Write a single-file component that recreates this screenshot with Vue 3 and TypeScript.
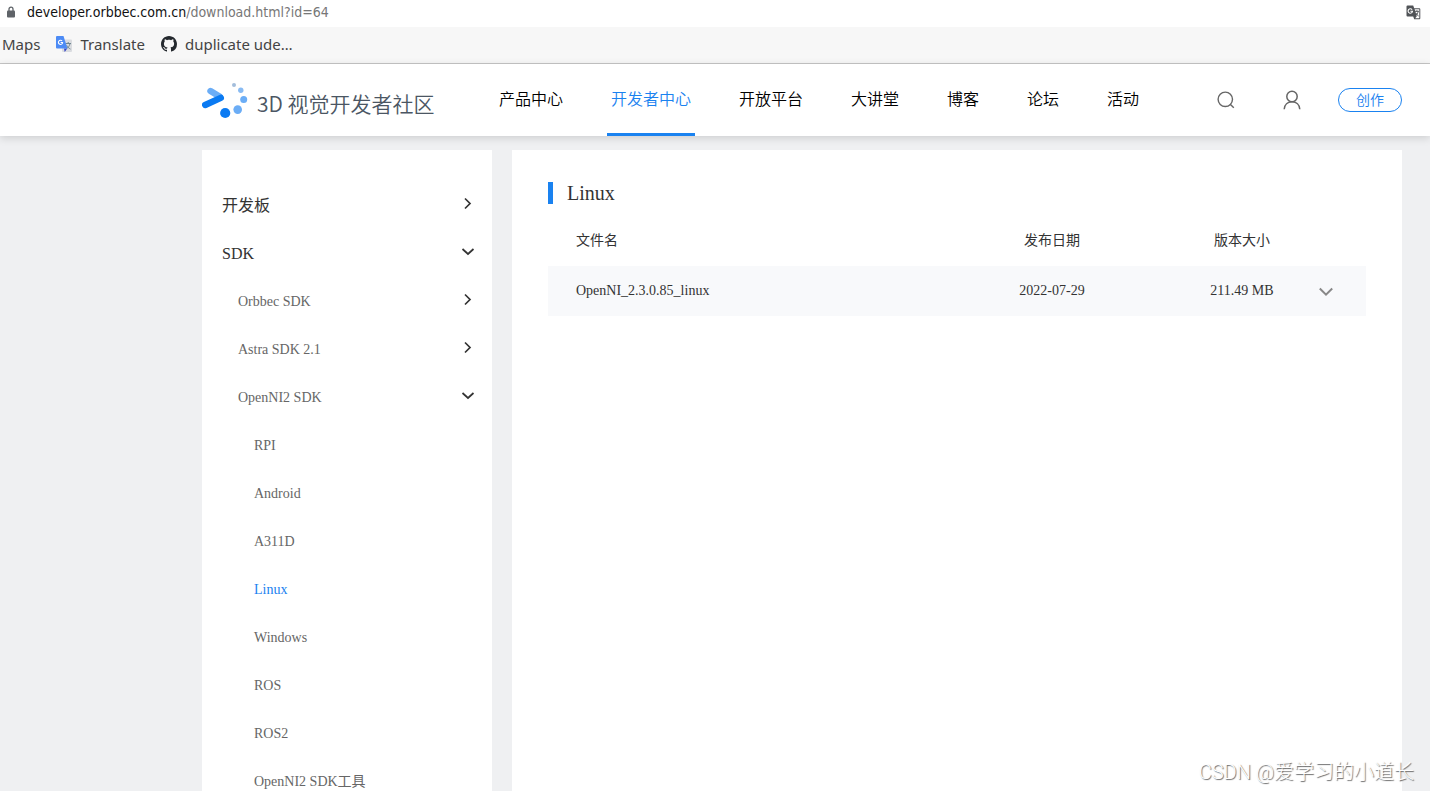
<script setup lang="ts">
import { ref } from 'vue'

interface NavItem {
  label: string
  active?: boolean
}

interface MenuItem {
  label: string
  level: 1 | 2 | 3
  arrow?: 'right' | 'down'
  active?: boolean
}

interface FileRow {
  name: string
  date: string
  size: string
}

const address = ref('developer.orbbec.com.cn')
const path = ref('/download.html?id=64')

const nav: NavItem[] = [
  { label: '产品中心' },
  { label: '开发者中心', active: true },
  { label: '开放平台' },
  { label: '大讲堂' },
  { label: '博客' },
  { label: '论坛' },
  { label: '活动' },
]

const menu: MenuItem[] = [
  { label: '开发板', level: 1, arrow: 'right' },
  { label: 'SDK', level: 1, arrow: 'down' },
  { label: 'Orbbec SDK', level: 2, arrow: 'right' },
  { label: 'Astra SDK 2.1', level: 2, arrow: 'right' },
  { label: 'OpenNI2 SDK', level: 2, arrow: 'down' },
  { label: 'RPI', level: 3 },
  { label: 'Android', level: 3 },
  { label: 'A311D', level: 3 },
  { label: 'Linux', level: 3, active: true },
  { label: 'Windows', level: 3 },
  { label: 'ROS', level: 3 },
  { label: 'ROS2', level: 3 },
  { label: 'OpenNI2 SDK工具', level: 3 },
]

const files: FileRow[] = [
  { name: 'OpenNI_2.3.0.85_linux', date: '2022-07-29', size: '211.49 MB' },
]
</script>

<template>
  <div class="page">
    <div class="address-bar">
      <svg class="lock" width="8" height="12" viewBox="0 0 8 12" aria-hidden="true">
        <path d="M2 5V3.200a2 2 0 0 1 4 0V5" fill="none" stroke="#5f6368" stroke-width="1.300" />
        <rect x="0" y="4.500" width="8" height="7" rx="1" fill="#5f6368" />
      </svg>
      <span class="url">{{ address }}<span class="url-path">{{ path }}</span></span>
      <button class="translate" type="button" aria-label="Translate this page">
        <svg width="15" height="15" viewBox="0 0 15 15" aria-hidden="true">
          <path d="M1.500.5h5.700l1 2.800H13.300a1 1 0 0 1 1 1v8.900a1 1 0 0 1-1 1H8.200L7.200 11.500H1.500a1 1 0 0 1-1-1v-9a1 1 0 0 1 1-1z" fill="#505357" />
          <path d="M8.600 4.200h4.700v9H9.200l1.600-1.900z" fill="#fff" />
          <path d="M6.100 4.700A2.200 2.200 0 1 0 6.500 6.200H4.400" fill="none" stroke="#fff" stroke-width="1.100" />
          <path d="M8.900 6.300h4M10.900 5.300v1M12.200 6.400c-.4 2-1.500 3.300-2.700 4.200M9.700 7.800c.7 1.400 1.600 2.300 2.900 3.200" fill="none" stroke="#505357" />
        </svg>
      </button>
    </div>

    <nav class="bookmarks" aria-label="Bookmarks">
      <a href="#maps">Maps</a>
      <a href="#translate">
        <svg width="16" height="16" viewBox="0 0 16 16" aria-hidden="true">
          <rect x="6" y="3.500" width="10" height="12.500" rx="1" fill="#dadce0" />
          <path d="M9.500 7.500h5.500M12.200 6v1.500M14 7.700c-.5 2.300-2 4-3.600 5M10.600 9.200c.8 1.700 2.200 3 3.900 3.900" fill="none" stroke="#6f8791" />
          <path d="M8 12.500h3.200L8.700 16z" fill="#3342c5" />
          <path d="M1 0h6.500l4 12.500H1a1 1 0 0 1-1-1V1a1 1 0 0 1 1-1z" fill="#4c8bf5" />
          <path d="M6.100 5A2.100 2.100 0 1 0 6.600 6.500H4.600" fill="none" stroke="#fff" stroke-width="1.100" />
        </svg>
        Translate
      </a>
      <a href="#github">
        <svg width="16" height="16" viewBox="0 0 16 16" aria-hidden="true">
          <path fill="#24292e" d="M8 0C3.580 0 0 3.580 0 8c0 3.540 2.290 6.530 5.470 7.590.4.070.55-.17.55-.38 0-.19-.01-.82-.01-1.490-2.010.37-2.530-.49-2.690-.94-.09-.23-.48-.94-.82-1.130-.28-.15-.68-.52-.01-.53.63-.01 1.080.58 1.230.82.72 1.210 1.870.87 2.330.66.07-.52.28-.87.51-1.070-1.780-.2-3.640-.89-3.640-3.950 0-.87.31-1.590.82-2.150-.08-.2-.36-1.020.08-2.120 0 0 .67-.21 2.200.82.64-.18 1.320-.27 2-.27s1.360.09 2 .27c1.530-1.040 2.200-.82 2.200-.82.44 1.100.16 1.920.08 2.120.51.56.82 1.270.82 2.150 0 3.070-1.870 3.750-3.650 3.950.29.25.54.73.54 1.480 0 1.070-.01 1.930-.01 2.200 0 .21.15.46.55.38A8.010 8.010 0 0 0 16 8c0-4.420-3.580-8-8-8z" />
        </svg>
        duplicate ude…
      </a>
    </nav>

    <header class="site-header">
      <a class="logo" href="#home">
        <svg width="47" height="38" viewBox="0 0 47 38" aria-hidden="true">
          <path d="M8.500 10 17.500 15.500" stroke="#6badf6" stroke-width="6.400" stroke-linecap="round" />
          <path d="M3.200 24 18.800 16.800" stroke="#0a7af2" stroke-width="6.400" stroke-linecap="round" />
          <circle cx="32" cy="4" r="2" fill="#a3bddb" />
          <circle cx="38.800" cy="9.300" r="2.700" fill="#89bbf3" />
          <circle cx="41.700" cy="18.500" r="3.500" fill="#6badf6" />
          <circle cx="35.700" cy="28.600" r="4.300" fill="#6badf6" />
          <circle cx="23.200" cy="32" r="5.100" fill="#0a7af2" />
        </svg>
        <span class="logo-text">3D 视觉开发者社区</span>
      </a>
      <nav class="main-nav" aria-label="Main">
        <a v-for="item in nav" :key="item.label" href="#nav" :class="{ active: item.active }">{{ item.label }}</a>
      </nav>
      <div class="tools">
        <button class="icon-button" type="button" aria-label="搜索">
          <svg width="18" height="18" viewBox="0 0 18 18" fill="none" stroke="#666" stroke-width="1.400" aria-hidden="true">
            <circle cx="8.300" cy="8.300" r="7.200" />
            <path d="M13.200 13.200 16.800 16.800" />
          </svg>
        </button>
        <button class="icon-button" type="button" aria-label="用户">
          <svg width="18" height="20" viewBox="0 0 18 20" fill="none" stroke="#666" stroke-width="1.500" aria-hidden="true">
            <ellipse cx="9" cy="6.500" rx="5.200" ry="5.300" />
            <path d="M1.200 19.200c.3-4.600 3.500-7.400 7.800-7.400s7.500 2.800 7.800 7.400" />
          </svg>
        </button>
        <button class="create" type="button">创作</button>
      </div>
    </header>

    <div class="content">
      <aside class="sidebar">
        <a
          v-for="item in menu"
          :key="item.label"
          href="#menu"
          :class="['menu-item', 'level-' + item.level, { active: item.active }]"
        >
          <span>{{ item.label }}</span>
          <svg v-if="item.arrow" class="arrow" width="14" height="14" viewBox="0 0 14 14" aria-hidden="true">
            <path
              :d="item.arrow === 'right' ? 'M4 1.500 9 6.500 4 11.500' : 'M1.500 4 7 9 12.500 4'"
              fill="none"
              stroke="#333"
              stroke-width="1.700"
            />
          </svg>
        </a>
      </aside>

      <main class="panel">
        <h1>Linux</h1>
        <table>
          <thead>
            <tr>
              <th class="name" scope="col">文件名</th>
              <th class="date" scope="col">发布日期</th>
              <th class="size" scope="col">版本大小</th>
              <td class="toggle"></td>
            </tr>
          </thead>
          <tbody>
            <tr v-for="file in files" :key="file.name">
              <td class="name">{{ file.name }}</td>
              <td class="date">{{ file.date }}</td>
              <td class="size">{{ file.size }}</td>
              <td class="toggle">
                <button class="icon-button" type="button" aria-label="展开">
                  <svg width="14" height="14" viewBox="0 0 14 14" aria-hidden="true">
                    <path d="M.8 4.500 7 10.700 13.200 4.500" fill="none" stroke="#888" stroke-width="2" />
                  </svg>
                </button>
              </td>
            </tr>
          </tbody>
        </table>
      </main>
    </div>

    <div class="watermark">CSDN @爱学习的小道长</div>
  </div>
</template>

<style>
body {
  margin: 0;
}
</style>

<style scoped>
.page {
  position: relative;
  display: flex;
  flex-direction: column;
  height: 100vh;
  overflow: hidden;
  background: #eff0f2;
  color: #333;
  font-family: "Liberation Serif", "Noto Sans CJK SC", serif;
  font-size: 14px;
}

a {
  color: inherit;
  text-decoration: none;
}

button {
  font-family: inherit;
  cursor: pointer;
}

.icon-button,
.translate {
  display: flex;
  padding: 0;
  border: 0;
  background: none;
}

.address-bar {
  display: flex;
  flex: none;
  align-items: center;
  height: 24px;
  padding: 0 9px 3px 7px;
  background: #fff;
  font-family: "DejaVu Sans Condensed", "Noto Sans", sans-serif;
  font-size: 14px;
  line-height: 24px;
}

.url {
  margin-left: 12px;
  color: #111;
}

.url-path {
  color: #777;
}

.translate {
  margin-left: auto;
}

.bookmarks {
  display: flex;
  flex: none;
  align-items: center;
  gap: 16px;
  height: 34px;
  padding: 0 2px 2px;
  border-bottom: 1px solid #c6c6c6;
  background: #f7f7f7;
  color: #444;
  font-family: "Noto Sans", sans-serif;
  font-size: 15px;
  line-height: 20px;
}

.bookmarks a {
  display: flex;
  align-items: center;
  gap: 8px;
}

.site-header {
  position: relative;
  display: flex;
  flex: none;
  height: 72px;
  padding: 0 28px 0 202px;
  background: #fff;
  box-shadow: 0 2px 8px rgba(0, 0, 0, 0.15);
  font-family: "Noto Sans CJK SC", sans-serif;
}

.logo {
  display: flex;
  align-items: center;
  gap: 8px;
  width: 234px;
  white-space: nowrap;
}

.logo-text {
  padding-top: 6px;
  color: #4b5663;
  font-size: 21px;
  font-weight: 350;
  line-height: 24px;
}

.main-nav {
  display: flex;
  gap: 40px;
  margin-left: 59px;
}

.main-nav a {
  box-sizing: border-box;
  height: 72px;
  padding: 0 4px;
  border-bottom: 3px solid transparent;
  color: #000;
  font-size: 16px;
  font-weight: 350;
  line-height: 68px;
  white-space: nowrap;
}

.main-nav a.active {
  border-color: #1a82f0;
  color: #1a82f0;
}

.tools {
  display: flex;
  align-items: center;
  margin-left: auto;
}

.tools .icon-button {
  margin-right: 48px;
}

.tools .icon-button + .icon-button {
  margin-right: 37px;
}

.create {
  width: 64px;
  height: 24px;
  padding: 0 0 2px;
  border: 1px solid #1a82f0;
  border-radius: 12px;
  background: #fff;
  color: #1a82f0;
  font-size: 14px;
  font-weight: 350;
  line-height: 20px;
}

.content {
  display: flex;
  flex: 1;
  gap: 20px;
  min-height: 0;
  padding: 14px 28px 0 202px;
}

.sidebar {
  box-sizing: border-box;
  flex: none;
  width: 290px;
  padding: 32px 17px 0 20px;
  background: #fff;
}

.menu-item {
  display: flex;
  align-items: center;
  justify-content: space-between;
  height: 48px;
  color: #666;
  font-size: 14px;
  line-height: 20px;
}

.menu-item.level-1 {
  color: #333;
  font-size: 16px;
}

.menu-item.level-2 {
  padding-left: 16px;
}

.menu-item.level-3 {
  padding-left: 32px;
}

.menu-item.active {
  color: #1a82f0;
}

.arrow {
  margin-bottom: 4px;
}

.panel {
  flex: 1;
  padding: 32px 36px 0;
  background: #fff;
}

h1 {
  margin: 0;
  padding-left: 14px;
  border-left: 5px solid #1a82f0;
  font-size: 20px;
  font-weight: 400;
  line-height: 22px;
}

table {
  width: 100%;
  margin-top: 12px;
  border-collapse: collapse;
  line-height: 20px;
  table-layout: fixed;
}

th,
td {
  height: 50px;
  padding: 0;
  font-weight: 400;
  text-align: center;
}

tbody tr {
  background: #f8f9fb;
}

.name {
  padding-left: 28px;
  text-align: left;
}

.date {
  width: 230px;
}

.size {
  width: 150px;
}

.toggle {
  width: 47px;
  padding-left: 2px;
}

.watermark {
  position: absolute;
  right: 16px;
  bottom: 4px;
  color: #fff;
  font-family: Roboto, "Noto Sans CJK SC", sans-serif;
  font-size: 20px;
  font-weight: 300;
  line-height: 30px;
  text-shadow: 1px 1px 1px #666;
}
</style>
